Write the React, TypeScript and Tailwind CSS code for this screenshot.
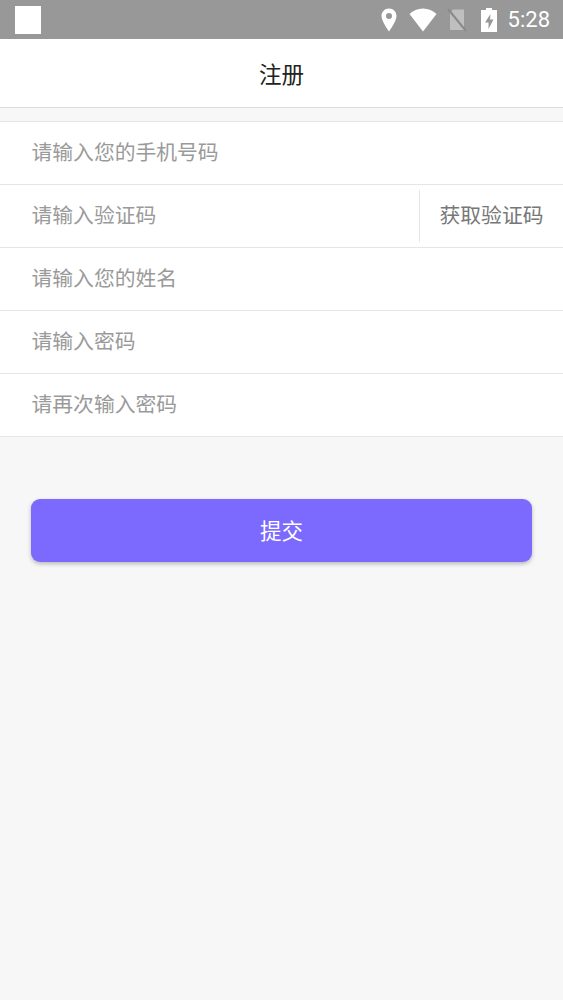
const cjk = "font-['Noto_Sans_CJK_SC','Noto_Sans',sans-serif]";

function StatusBar() {
  return (
    <div className="h-[39px] bg-[#989898] flex items-center pl-[15px] pr-[13px]">
      <div className="w-[26px] h-[28px] bg-white" />
      <div className="ml-auto flex items-center">
        <svg width="16" height="24" viewBox="0 0 16 24" className="mr-[11px] -translate-x-[1px]">
          <path
            fill="#fff"
            fillRule="evenodd"
            d="M8 0.500C3.700 0.500 0.500 3.800 0.500 8 0.500 13.500 8 23.500 8 23.500s7.500-10 7.500-15.500C15.500 3.800 12.300 0.500 8 0.500zm0 10.500a3 3 0 1 1 0-6 3 3 0 0 1 0 6z"
          />
        </svg>
        <svg width="28" height="24" viewBox="0 0 28 24" className="mr-[10px]">
          <path fill="#fff" d="M14 23.500 0.500 6C4 2.800 8.700 0.500 14 0.500S24 2.800 27.500 6z" />
        </svg>
        <svg width="20" height="24" viewBox="0 0 20 24" className="mr-[14px]">
          <path fill="#fff" fillOpacity=".38" d="M6 1.500h11v20.500H3V5z" />
          <path stroke="#8a8a8a" strokeWidth="2" d="M1 1l18 22" />
        </svg>
        <svg width="16" height="24" viewBox="0 0 16 24" className="mr-[11px]">
          <path
            fill="#fff"
            fillRule="evenodd"
            d="M5 0h6v2h5v22H0V2h5zM9.500 6 4 14.500h3.500V21l5-9.500H9z"
          />
        </svg>
        <span className="font-['Roboto',sans-serif] text-[22px] leading-none text-white">5:28</span>
      </div>
    </div>
  );
}

function Row({ text, last }: { text: string; last?: boolean }) {
  return (
    <div className={`flex items-center pl-[31.500px] pb-[3px] ${last ? 'h-[62px]' : 'h-[63px] border-b border-[#e6e6e6]'}`}>
      <span className="text-[20.800px] text-[#9a9a9a]">{text}</span>
    </div>
  );
}

export default function App() {
  return (
    <div className={`min-h-[1000px] bg-[#f7f7f7] flex flex-col ${cjk}`}>
      <StatusBar />
      <div className="h-[69px] bg-white border-b border-[#dedede] flex items-center justify-center">
        <span className="text-[22.500px] leading-[32px] pb-[1px] text-[#222222]">注册</span>
      </div>
      <div className="mt-[13px] bg-white border-y border-[#e6e6e6]">
        <Row text="请输入您的手机号码" />
        <div className="h-[63px] flex items-center border-b border-[#e6e6e6]">
          <span className="pl-[31.500px] pb-[3px] flex-1 text-[20.800px] text-[#9a9a9a]">请输入验证码</span>
          <div className="w-[144px] h-[52px] border-l border-[#e6e6e6] flex items-center justify-center pb-[3px]">
            <span className="text-[20.800px] text-[#777777]">获取验证码</span>
          </div>
        </div>
        <Row text="请输入您的姓名" />
        <Row text="请输入密码" />
        <Row text="请再次输入密码" last />
      </div>
      <div className="mt-[62px] px-[31px]">
        <button className="w-full h-[63px] pb-[2px] rounded-[9px] bg-[#7c6aff] text-white text-[21.500px] leading-[32px] shadow-[0_2px_4px_rgba(0,0,0,0.25)]">
          提交
        </button>
      </div>
    </div>
  );
}
